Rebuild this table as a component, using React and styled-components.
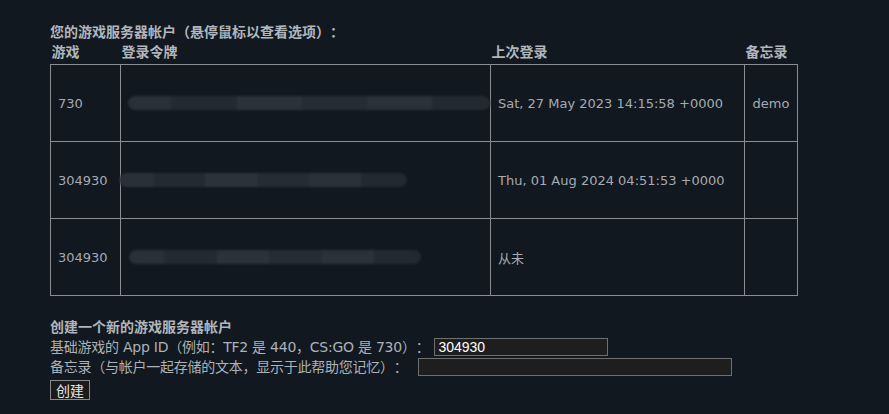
import React from 'react';
import styled, { createGlobalStyle } from 'styled-components';

const GlobalStyle = createGlobalStyle`
  html, body {
    margin: 0;
    background: #111820;
  }
  body {
    font-family: 'DejaVu Sans', 'Noto Sans CJK SC', sans-serif;
    font-size: 13px;
    color: #acb2b8;
    text-spacing-trim: space-all;
  }
`;

const accounts = [
  { app: '730', token: 362, shift: 7, last: 'Sat, 27 May 2023 14:15:58 +0000', memo: 'demo' },
  { app: '304930', token: 288, shift: -2, last: 'Thu, 01 Aug 2024 04:51:53 +0000', memo: '' },
  { app: '304930', token: 292, shift: 8, last: '从未', memo: '' },
];

const Page = styled.div`
  padding: 22px 0 0 50px;
  width: 760px;
`;

const Heading = styled.div`
  font-weight: bold;
  font-size: 14px;
  line-height: 20px;
  color: #b0b6bc;
`;

const Table = styled.table`
  border-collapse: collapse;
  width: 748px;
  table-layout: fixed;
`;

const Th = styled.th`
  text-align: left;
  font-weight: bold;
  font-size: 14px;
  padding: 1px 1px 2px;
  line-height: 19px;
  color: #b0b6bc;
  width: ${(p) => p.w}px;
`;

const Td = styled.td`
  border: 1px solid #8a8d91;
  height: 76px;
  padding: 0 7px;
  text-align: ${(p) => (p.center ? 'center' : 'left')};
  color: #a5abb1;
  white-space: nowrap;
  overflow: visible;
`;

const Redacted = styled.div`
  height: 14px;
  width: ${(p) => p.w}px;
  margin-left: ${(p) => p.shift - 7}px;
  border-radius: 7px;
  background: linear-gradient(
    90deg,
    #2a3038 0 12%,
    #242a32 12% 30%,
    #2c323a 30% 48%,
    #262c34 48% 66%,
    #2b3139 66% 84%,
    #232930 84% 100%
  );
  filter: blur(1px);
`;

const Form = styled.div`
  margin-top: 21px;
  line-height: 20px;
`;

const Line = styled.div`
  display: flex;
  align-items: center;
  height: 20px;
  font-size: 14px;
  letter-spacing: -0.25px;
`;

const Input = styled.input`
  box-sizing: border-box;
  margin-left: ${(p) => p.gap}px;
  width: ${(p) => p.w}px;
  height: 18px;
  padding: 0 3px;
  background: #1e1e1e;
  border: 1px solid #6f6f6f;
  color: #ffffff;
  font-family: 'Liberation Sans', sans-serif;
  font-size: 14px;
  letter-spacing: 0;
  outline: none;
`;

const Button = styled.button`
  margin-top: 3px;
  height: 20px;
  padding: 0 5px;
  background: #1b1b1b;
  border: 1px solid #8a8a8a;
  color: #e8e8e8;
  font-family: 'Noto Sans CJK SC', sans-serif;
  font-size: 14px;
  line-height: 16px;
`;

export default function App() {
  return (
    <Page>
      <GlobalStyle />
      <Heading>您的游戏服务器帐户（悬停鼠标以查看选项）：</Heading>
      <Table>
        <thead>
          <tr>
            <Th w={68}>游戏</Th>
            <Th w={368}>登录令牌</Th>
            <Th w={252}>上次登录</Th>
            <Th w={51}>备忘录</Th>
          </tr>
        </thead>
        <tbody>
          {accounts.map((a, i) => (
            <tr key={i}>
              <Td>{a.app}</Td>
              <Td>
                <Redacted w={a.token} shift={a.shift} />
              </Td>
              <Td>{a.last}</Td>
              <Td center>{a.memo}</Td>
            </tr>
          ))}
        </tbody>
      </Table>
      <Form>
        <Heading>创建一个新的游戏服务器帐户</Heading>
        <Line>
          基础游戏的 App ID（例如：TF2 是 440，CS:GO 是 730）：
          <Input gap={5} w={174} defaultValue="304930" />
        </Line>
        <Line>
          备忘录（与帐户一起存储的文本，显示于此帮助您记忆）：
          <Input gap={10} w={314} />
        </Line>
        <Button>创建</Button>
      </Form>
    </Page>
  );
}
